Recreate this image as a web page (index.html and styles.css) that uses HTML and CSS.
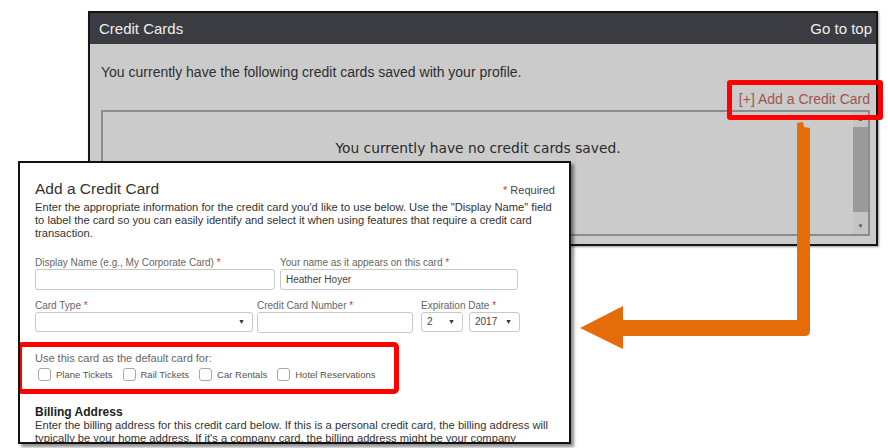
FILE: index.html
```html
<!DOCTYPE html>
<html lang="en">
<head>
    <meta charset="UTF-8">
    <title>Credit Cards</title>
    <link rel="stylesheet" href="styles.css">
</head>
<body>

    <div class="panel">
        <div class="panel-head">
            <span>Credit Cards</span>
            <a class="top-link" href="#">Go to top</a>
        </div>
        <div class="panel-body">
            <p class="intro">You currently have the following credit cards saved with your profile.</p>
            <div class="add-row">
                <a class="add-link" href="#">[+] Add a Credit Card</a>
            </div>
            <div class="card-list">
                <div class="card-list-main">You currently have no credit cards saved.</div>
                <div class="scrollbar">
                    <span class="sb-arrow">&#9650;</span>
                    <span class="sb-thumb"></span>
                    <span class="sb-gap"></span>
                    <span class="sb-arrow">&#9660;</span>
                </div>
            </div>
        </div>
    </div>

    <div class="dialog">
        <div class="dialog-head">
            <h2>Add a Credit Card</h2>
            <span class="required"><span class="star">*</span> Required</span>
        </div>
        <p class="help">Enter the appropriate information for the credit card you'd like to use below. Use the "Display Name" field to label the card so you can easily identify and select it when using features that require a credit card transaction.</p>

        <div class="row row-names">
            <div class="field">
                <label>Display Name (e.g., My Corporate Card) <span class="star">*</span></label>
                <div class="input"></div>
            </div>
            <div class="field">
                <label>Your name as it appears on this card <span class="star">*</span></label>
                <div class="input">Heather Hoyer</div>
            </div>
        </div>

        <div class="row row-card">
            <div class="field">
                <label>Card Type <span class="star">*</span></label>
                <div class="select"><span></span><span class="arrow">&#9660;</span></div>
            </div>
            <div class="field">
                <label>Credit Card Number <span class="star">*</span></label>
                <div class="input"></div>
            </div>
            <div class="field">
                <label>Expiration Date <span class="star">*</span></label>
                <div class="exp">
                    <div class="select month"><span>2</span><span class="arrow">&#9660;</span></div>
                    <div class="select year"><span>2017</span><span class="arrow">&#9660;</span></div>
                </div>
            </div>
        </div>

        <div class="defaults">
            <p>Use this card as the default card for:</p>
            <div class="checks">
                <label><input type="checkbox"> Plane Tickets</label>
                <label><input type="checkbox"> Rail Tickets</label>
                <label><input type="checkbox"> Car Rentals</label>
                <label><input type="checkbox"> Hotel Reservations</label>
            </div>
        </div>

        <h3>Billing Address</h3>
        <p class="help">Enter the billing address for this credit card below. If this is a personal credit card, the billing address will typically be your home address. If it's a company card, the billing address might be your company address.</p>
    </div>

    <!-- callout arrow from the link to the dialog -->
    <svg class="arrow-overlay" width="888" height="448" viewBox="0 0 888 448">
        <path d="M797 123 L803 122 L804 127 L810 128 L810 331 Q810 336 805 336 L623 336 L623 349 L580 328 L623 306 L623 320 L797 320 Z" fill="#e46c0a"/>
    </svg>

</body>
</html>
```

FILE: styles.css
```css
body {
    margin: 0;
    padding: 11px 0 0 88px;
    width: 888px;
    height: 448px;
    box-sizing: border-box;
    overflow: hidden;
    position: relative;
    background: #fff;
    font-family: "Liberation Sans", Arial, sans-serif;
    color: #333;
}

p, h2, h3 {
    margin: 0;
}

a {
    text-decoration: none;
}

/* back panel */

.panel {
    width: 790px;
    height: 235px;
    box-sizing: border-box;
    border: 2px solid #151515;
    background: #cbcbcb;
    box-shadow: 1px 1px 2px rgba(0, 0, 0, 0.4);
}

.panel-head {
    height: 31px;
    display: flex;
    justify-content: space-between;
    align-items: center;
    padding: 0 4px 0 9px;
    background: #3a3c41;
    color: #eeeeee;
    font-size: 15px;
}

.top-link {
    color: #eeeeee;
}

.panel-body {
    padding: 20px 6px 0 11px;
}

.intro {
    font-size: 14px;
    line-height: 16px;
    color: #2e2e2e;
}

.add-row {
    display: flex;
    justify-content: flex-end;
}

.add-link {
    position: relative;
    z-index: 1;
    margin: 0 -13px -10px 0;
    padding: 6px 8px 8px 7px;
    border: 5px solid #ff0000;
    border-radius: 3px;
    font-size: 14px;
    line-height: 16px;
    color: #a0554a;
}

.card-list {
    height: 126px;
    box-sizing: border-box;
    border: 2px solid #8c8c8c;
    display: flex;
}

.card-list-main {
    flex: 1;
    text-align: center;
    padding-top: 28px;
    font-family: "DejaVu Sans", Verdana, sans-serif;
    font-size: 13.8px;
    line-height: 16px;
    color: #2a2a2a;
}

.scrollbar {
    width: 15px;
    display: flex;
    flex-direction: column;
    background: #c4c4c4;
}

.sb-arrow {
    height: 15px;
    font-size: 6px;
    line-height: 15px;
    text-align: center;
    color: #555;
}

.sb-thumb {
    height: 85px;
    background: #9b9b9b;
}

.sb-gap {
    flex: 1;
}

/* add card dialog */

.dialog {
    position: absolute;
    left: 18px;
    top: 161px;
    width: 553px;
    height: 283px;
    box-sizing: border-box;
    padding: 16px 14px 0 15px;
    border: 2px solid #111;
    background: #fff;
    box-shadow: 3px 3px 3px rgba(0, 0, 0, 0.45);
    overflow: hidden;
}

.dialog-head {
    display: flex;
    justify-content: space-between;
    align-items: baseline;
}

.dialog-head h2 {
    font-size: 15.5px;
    font-weight: normal;
    line-height: 20px;
    color: #333;
}

.required {
    font-size: 11px;
    color: #444;
}

.star {
    color: #d9363e;
}

.help {
    margin-top: 2px;
    font-size: 11.18px;
    line-height: 13px;
    color: #333;
}

.row {
    display: flex;
}

.row-names {
    margin-top: 17px;
    gap: 5px;
}

.row-names .field:first-child {
    width: 240px;
}

.row-names .field:last-child {
    width: 238px;
}

.row-card {
    margin-top: 10px;
}

.row-card .field:nth-child(1) {
    width: 218px;
    margin-right: 4px;
}

.row-card .field:nth-child(2) {
    width: 156px;
    margin-right: 8px;
}

.field label {
    display: block;
    font-size: 10px;
    line-height: 12px;
    color: #666;
    white-space: nowrap;
}

.input,
.select {
    height: 21px;
    box-sizing: border-box;
    border: 1px solid #c8c8c8;
    border-radius: 3px;
    padding: 0 5px;
    font-size: 10px;
    line-height: 19px;
    color: #444;
}

.select {
    height: 20px;
    line-height: 18px;
    display: flex;
    justify-content: space-between;
}

.select .arrow {
    font-size: 7px;
    color: #333;
    padding-right: 2px;
}

.exp {
    display: flex;
    gap: 6px;
}

.select.month {
    width: 42px;
}

.select.year {
    width: 51px;
}

.defaults {
    width: 382px;
    box-sizing: border-box;
    margin: 9px 0 0 -18px;
    padding: 4px 0 8px 13px;
    border: 5px solid #ff0000;
    border-radius: 5px;
}

.defaults p {
    font-size: 11px;
    line-height: 14px;
    color: #666;
}

.checks {
    display: flex;
    gap: 10px;
    margin: 3px 0 0 3px;
}

.checks label {
    display: flex;
    align-items: center;
    gap: 5px;
    font-size: 9.5px;
    line-height: 13px;
    color: #555;
}

.checks input {
    appearance: none;
    width: 13px;
    height: 13px;
    margin: 0;
    border: 1px solid #a8a8a8;
    border-radius: 3px;
    background: #fff;
}

.dialog h3 {
    margin-top: 11px;
    font-size: 12px;
    line-height: 14px;
    color: #222;
}

.dialog h3 + .help {
    margin-top: 0;
}

.arrow-overlay {
    position: absolute;
    left: 0;
    top: 0;
    pointer-events: none;
}
```
